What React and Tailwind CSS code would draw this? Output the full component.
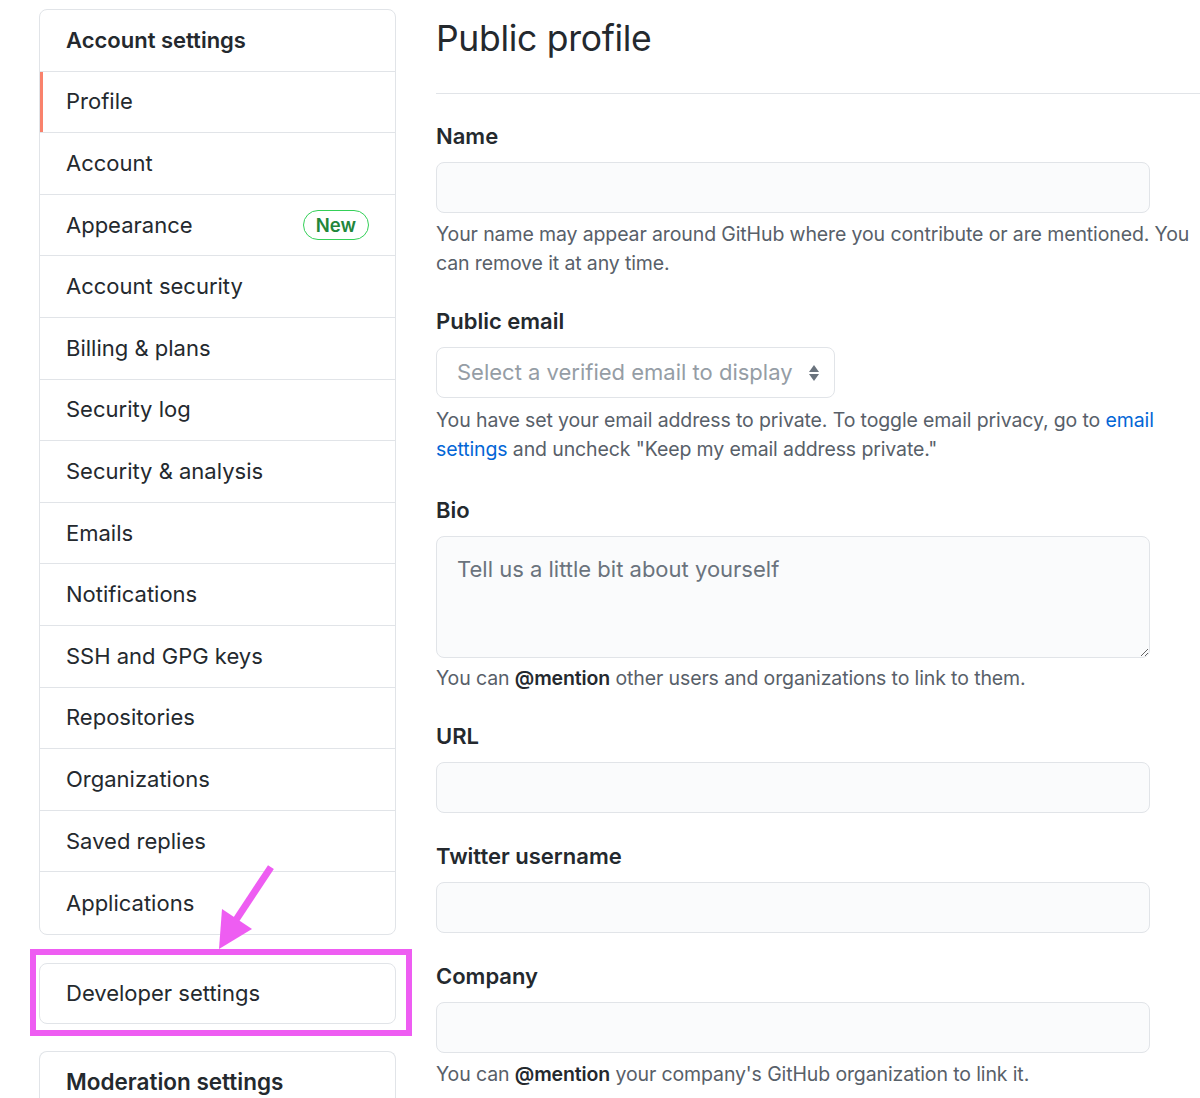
import React from "react";

const font = { fontFamily: "Inter, 'Liberation Sans', sans-serif" };

const navItems = [
  "Profile",
  "Account",
  "Appearance",
  "Account security",
  "Billing & plans",
  "Security log",
  "Security & analysis",
  "Emails",
  "Notifications",
  "SSH and GPG keys",
  "Repositories",
  "Organizations",
  "Saved replies",
  "Applications",
];

const Label = ({ children, className = "" }) => (
  <div className={`text-[22px] font-semibold text-[#24292e] leading-[28px] ${className}`}>
    {children}
  </div>
);

const TextInput = ({ className = "" }) => (
  <div
    className={`h-[51px] w-[714px] rounded-[8px] border border-[#e1e4e8] bg-[#fafbfc] ${className}`}
  />
);

const Help = ({ children, className = "" }) => (
  <p className={`text-[19.5px] leading-[29px] tracking-[-0.12px] text-[#586069] ${className}`}>
    {children}
  </p>
);

const Sidebar = () => (
  <div className="w-[357px] shrink-0 pt-[9px]">
    <div className="overflow-hidden rounded-[8px] border border-[#e1e4e8] bg-white">
      <div className="flex h-[61.6px] items-center border-b border-[#e1e4e8] pl-[26px] text-[22px] font-semibold text-[#24292e]">
        Account settings
      </div>
      {navItems.map((item, i) => (
        <div
          key={item}
          className={`relative flex h-[61.6px] items-center justify-between pl-[26px] pr-[26px] text-[22px] text-[#24292e] ${
            i < navItems.length - 1 ? "border-b border-[#e1e4e8]" : ""
          }`}
        >
          {i === 0 && (
            <span className="absolute left-0 top-0 h-full w-[3px] bg-[#f9826c]" />
          )}
          <span>{item}</span>
          {item === "Appearance" && (
            <span className="rounded-full border-[1.5px] border-[#34d058] px-[12px] py-[1px] text-[18.5px] font-semibold leading-[26px] text-[#22863a]">
              New
            </span>
          )}
        </div>
      ))}
    </div>

    <div className="relative mt-[28px]">
      <div className="flex h-[61px] items-center rounded-[8px] border border-[#e1e4e8] bg-white pl-[26px] text-[22px] text-[#24292e]">
        Developer settings
      </div>
      {/* highlight frame */}
      <div className="pointer-events-none absolute -left-[9px] -right-[16px] -top-[14px] -bottom-[12px] border-[6px] border-[#ee5df2]" />
      {/* arrow */}
      <svg
        className="pointer-events-none absolute left-[137px] -top-[100px]"
        width="100"
        height="90"
        viewBox="0 0 100 90"
      >
        <line x1="93" y1="7" x2="58" y2="60" stroke="#ee5df2" strokeWidth="7" strokeLinecap="square" />
        <polygon points="43,86 46,46 76,66" fill="#ee5df2" />
      </svg>
    </div>

    <div className="mt-[27px] flex h-[61px] items-center rounded-t-[8px] border border-b-0 border-[#e1e4e8] bg-white pl-[26px] text-[22.5px] font-semibold text-[#24292e]">
      Moderation settings
    </div>
  </div>
);

export default function App() {
  return (
    <div className="h-[1098px] w-[1200px] overflow-hidden bg-white" style={font}>
      <div className="flex pl-[39px]">
        <Sidebar />
        <main className="ml-[40px] flex-1">
          <div className="border-b border-[#e1e4e8] pb-[28px] pt-[13px]">
            <h1 className="text-[35.5px] font-normal leading-[52px] tracking-[-0.3px] text-[#24292e]">
              Public profile
            </h1>
          </div>

          <Label className="mt-[28px]">Name</Label>
          <TextInput className="mt-[12px]" />
          <Help className="mt-[7px]">
            Your name may appear around GitHub where you contribute or are mentioned. You can
            remove it at any time.
          </Help>

          <Label className="mt-[29px]">Public email</Label>
          <div className="mt-[12px] flex h-[51px] w-[399px] items-center justify-between rounded-[8px] border border-[#e1e4e8] bg-white pl-[20px] pr-[14px]">
            <span className="text-[22px] text-[#959da5]">Select a verified email to display</span>
            <svg width="12" height="18" viewBox="0 0 12 18">
              <polygon points="6,1 11,8 1,8" fill="#6a737d" />
              <polygon points="6,17 11,10 1,10" fill="#6a737d" />
            </svg>
          </div>
          <Help className="mt-[8px]">
            You have set your email address to private. To toggle email privacy, go to{" "}
            <span className="text-[#0366d6]">email</span>{" "}
            <span className="text-[#0366d6]">settings</span> and uncheck "Keep my email
            address private."
          </Help>

          <Label className="mt-[32px]">Bio</Label>
          <textarea
            className="mt-[12px] block h-[122px] w-[714px] resize rounded-[8px] border border-[#e1e4e8] bg-[#fafbfc] px-[20px] py-[16px] text-[22px] text-[#24292e] outline-none placeholder:text-[#6a737d]"
            placeholder="Tell us a little bit about yourself"
            style={font}
          />
          <Help className="mt-[6px]">
            You can <b className="font-semibold text-[#24292e]">@mention</b> other users and
            organizations to link to them.
          </Help>

          <Label className="mt-[29px]">URL</Label>
          <TextInput className="mt-[12px]" />

          <Label className="mt-[29px]">Twitter username</Label>
          <TextInput className="mt-[12px]" />

          <Label className="mt-[29px]">Company</Label>
          <TextInput className="mt-[12px]" />
          <Help className="mt-[7px]">
            You can <b className="font-semibold text-[#24292e]">@mention</b> your company's
            GitHub organization to link it.
          </Help>
        </main>
      </div>
    </div>
  );
}
